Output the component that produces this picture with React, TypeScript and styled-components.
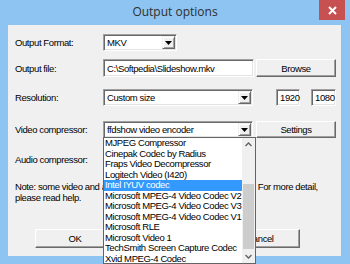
import React from 'react'
import styled, { createGlobalStyle } from 'styled-components'

const Global = createGlobalStyle`
  html, body { margin: 0; padding: 0; overflow: hidden; }
  body { background: #8ec4f1; }
`

const Window = styled.div`
  width: 350px;
  height: 264px;
  background: #8ec4f1;
  display: flex;
  flex-direction: column;
  font-family: "Liberation Sans", Arial, sans-serif;
  font-size: 9.5px;
  letter-spacing: -0.4px;
  color: #000;
`

const TitleBar = styled.div`
  height: 25px;
  display: grid;
  grid-template-columns: 1fr auto 1fr;
  align-items: start;
`

const Title = styled.div`
  grid-column: 2;
  font-family: "Open Sans", "Liberation Sans", sans-serif;
  font-size: 12px;
  letter-spacing: 0;
  color: #2e2e2e;
  line-height: 24px;
`

const CloseButton = styled.div`
  grid-column: 3;
  justify-self: end;
  margin-right: 5px;
  width: 26px;
  height: 20px;
  background: #c75050;
  display: flex;
  align-items: center;
  justify-content: center;
`

const Client = styled.div`
  margin: 0 8px;
  height: 231px;
  background: #f0f0f0;
  box-sizing: border-box;
  border-right: 1px solid #a7b9cc;
  padding: 9px 0 0 7px;
  display: flex;
  flex-direction: column;
`

const Row = styled.div<{ $top: number; $h: number }>`
  display: flex;
  align-items: center;
  margin-top: ${p => p.$top}px;
  height: ${p => p.$h}px;
`

const Label = styled.div`
  width: 88px;
  flex: none;
`

const Sunken = styled.div<{ $w: number; $gap?: number }>`
  box-sizing: border-box;
  width: ${p => p.$w}px;
  margin-left: ${p => p.$gap || 0}px;
  height: 100%;
  background: #fff;
  border-top: 1px solid #a0a0a0;
  border-left: 1px solid #a0a0a0;
  border-right: 1px solid #fff;
  border-bottom: 1px solid #fff;
  box-shadow: inset 1px 1px 0 #696969, inset -1px -1px 0 #e3e3e3;
  display: flex;
  align-items: center;
  padding-left: 3px;
  position: relative;
  white-space: nowrap;
`

const Field = styled.span`
  flex: 1;
  overflow: hidden;
`

const ArrowBox = styled.div`
  width: 13px;
  height: 13px;
  margin-right: 1px;
  box-sizing: border-box;
  background: #f0f0f0;
  border-top: 1px solid #f0f0f0;
  border-left: 1px solid #f0f0f0;
  border-right: 1px solid #696969;
  border-bottom: 1px solid #696969;
  box-shadow: inset 1px 1px 0 #fff, inset -1px -1px 0 #a0a0a0;
  display: flex;
  align-items: center;
  justify-content: center;
`

const Button = styled.div<{ $w: number; $gap?: number }>`
  box-sizing: border-box;
  width: ${p => p.$w}px;
  margin-left: ${p => p.$gap || 0}px;
  height: 100%;
  background: #f0f0f0;
  border-top: 1px solid #fff;
  border-left: 1px solid #fff;
  border-right: 1px solid #696969;
  border-bottom: 1px solid #696969;
  box-shadow: inset -1px -1px 0 #a0a0a0;
  display: flex;
  align-items: center;
  justify-content: center;
`

const Note = styled.div`
  margin-top: 15px;
  line-height: 11px;
  white-space: nowrap;
`

const ListPopup = styled.div`
  position: absolute;
  top: 100%;
  left: -1px;
  width: 153px;
  height: 127px;
  box-sizing: border-box;
  background: #fff;
  border: 1px solid #646464;
  display: flex;
  z-index: 5;
`

const Items = styled.div`
  flex: 1;
  display: flex;
  flex-direction: column;
  overflow: hidden;
`

const Item = styled.div<{ $sel?: boolean }>`
  height: 10.5px;
  line-height: 10.5px;
  padding-left: 1px;
  white-space: nowrap;
  background: ${p => (p.$sel ? '#3399ff' : 'transparent')};
  color: ${p => (p.$sel ? '#fff' : '#000')};
`

const ScrollBar = styled.div`
  width: 13px;
  background: #f0f0f0;
  display: flex;
  flex-direction: column;
`

const ScrollBtn = styled.div`
  height: 13px;
  display: flex;
  align-items: center;
  justify-content: center;
`

const Track = styled.div`
  flex: 1;
  display: flex;
  flex-direction: column;
  padding: 0 1px;
`

const Thumb = styled.div<{ $top: number; $h: number }>`
  margin-top: ${p => p.$top}px;
  height: ${p => p.$h}px;
  background: #cdcdcd;
`

const DownTri = () => (
  <svg width="7" height="4" viewBox="0 0 7 4">
    <path d="M0 0H7L3.5 4Z" fill="#000" />
  </svg>
)

const Chevron = ({ up }: { up?: boolean }) => (
  <svg width="7" height="5" viewBox="0 0 7 5">
    <path d={up ? 'M0.5 4L3.5 1L6.5 4' : 'M0.5 1L3.5 4L6.5 1'} fill="none" stroke="#606060" strokeWidth="1.3" />
  </svg>
)

const codecs = [
  'MJPEG Compressor',
  'Cinepak Codec by Radius',
  'Fraps Video Decompressor',
  'Logitech Video (I420)',
  'Intel IYUV codec',
  'Microsoft MPEG-4 Video Codec V2',
  'Microsoft MPEG-4 Video Codec V3',
  'Microsoft MPEG-4 Video Codec V1',
  'Microsoft RLE',
  'Microsoft Video 1',
  'TechSmith Screen Capture Codec',
  'Xvid MPEG-4 Codec',
]

const App = () => {
  return (
    <Window>
      <Global />
      <TitleBar>
        <Title>Output options</Title>
        <CloseButton>
          <svg width="9" height="9" viewBox="0 0 9 9">
            <path d="M1 1L8 8M8 1L1 8" stroke="#fff" strokeWidth="2" />
          </svg>
        </CloseButton>
      </TitleBar>
      <Client>
        <Row $top={0} $h={17}>
          <Label>Output Format:</Label>
          <Sunken $w={74}>
            <Field>MKV</Field>
            <ArrowBox><DownTri /></ArrowBox>
          </Sunken>
        </Row>
        <Row $top={8} $h={18}>
          <Label>Output file:</Label>
          <Sunken $w={151}>
            <Field>C:\Softpedia\Slideshow.mkv</Field>
          </Sunken>
          <Button $w={80} $gap={2}>Browse</Button>
        </Row>
        <Row $top={12} $h={17}>
          <Label>Resolution:</Label>
          <Sunken $w={150}>
            <Field>Custom size</Field>
            <ArrowBox><DownTri /></ArrowBox>
          </Sunken>
          <Sunken $w={24} $gap={23}>1920</Sunken>
          <Sunken $w={25} $gap={11}>1080</Sunken>
        </Row>
        <Row $top={15} $h={17}>
          <Label>Video compressor:</Label>
          <Sunken $w={150}>
            <Field>ffdshow video encoder</Field>
            <ArrowBox><DownTri /></ArrowBox>
            <ListPopup>
              <Items>
                {codecs.map(c => (
                  <Item key={c} $sel={c === 'Intel IYUV codec'}>{c}</Item>
                ))}
              </Items>
              <ScrollBar>
                <ScrollBtn><Chevron up /></ScrollBtn>
                <Track>
                  <Thumb $top={33} $h={65} />
                </Track>
                <ScrollBtn><Chevron /></ScrollBtn>
              </ScrollBar>
            </ListPopup>
          </Sunken>
          <Button $w={80} $gap={3}>Settings</Button>
        </Row>
        <Row $top={14} $h={14}>
          <Label>Audio compressor:</Label>
        </Row>
        <Note>
          Note: some video and audio encoders might not work correctly. For more detail,
          <br />
          please read help.
        </Note>
        <Row $top={26} $h={19}>
          <Button $w={80} $gap={20}>OK</Button>
          <Button $w={80} $gap={105}>Cancel</Button>
        </Row>
      </Client>
    </Window>
  )
}

export default App
